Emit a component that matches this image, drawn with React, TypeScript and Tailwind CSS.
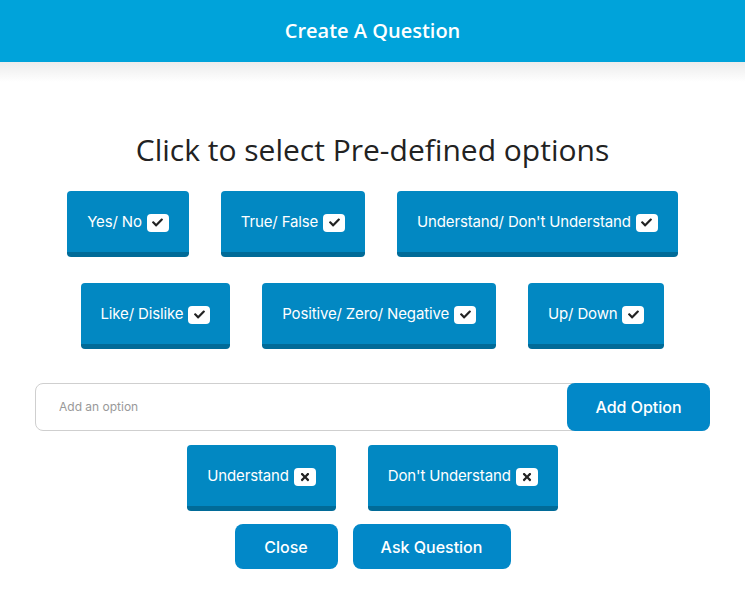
import React from 'react';
import { FaCheck, FaTimes } from 'react-icons/fa';

const presetRows = [
  ['Yes/ No', 'True/ False', "Understand/ Don't Understand"],
  ['Like/ Dislike', 'Positive/ Zero/ Negative', 'Up/ Down'],
];

const OptionButton = ({ label, selected }: { label: string; selected: boolean }) => (
  <button className="h-[66px] px-5 pt-[2px] flex items-center gap-[5px] bg-[#0288c2] border-b-[5px] border-[#016b98] rounded-[4px] text-white text-[15px] tracking-[-0.15px] font-['Inter',sans-serif]">
    <span>{label}</span>
    <span className="w-[22px] h-[18px] rounded-[4px] bg-white flex items-center justify-center text-[#222]">
      {selected ? <FaCheck className="w-[11px] h-[11px]" /> : <FaTimes className="w-[12px] h-[12px]" />}
    </span>
  </button>
);

export default function App() {
  return (
    <div className="w-[745px] h-[603px] bg-white overflow-hidden font-['Inter',sans-serif]">
      {/* Header */}
      <div className="relative h-[62px] bg-[#00a3da] flex items-center justify-center">
        <h1 className="text-white text-[20px] font-semibold font-['Open_Sans',sans-serif]">
          Create A Question
        </h1>
        <div className="absolute left-0 right-0 top-[62px] h-[20px] bg-gradient-to-b from-[#ececec] to-white" />
      </div>

      <div className="flex flex-col items-center pt-[69px]">
        <h2 className="text-[30px] leading-[38px] text-[#222] font-['Open_Sans',sans-serif]">
          Click to select Pre-defined options
        </h2>

        <div className="mt-[22px] flex flex-col items-center gap-[26px]">
          {presetRows.map((row, i) => (
            <div key={i} className="flex gap-8">
              {row.map((label) => (
                <OptionButton key={label} label={label} selected />
              ))}
            </div>
          ))}
        </div>

        {/* Add option */}
        <div className="mt-[34px] w-[675px] h-[48px] flex border border-[#cfcfcf] rounded-[8px]">
          <input
            className="flex-1 pl-[23px] text-[12px] text-[#555] placeholder-[#999] outline-none bg-transparent rounded-l-[8px]"
            placeholder="Add an option"
          />
          <button className="-my-px -mr-px w-[143px] bg-[#0288c8] rounded-[8px] text-white text-[16px] font-medium">
            Add Option
          </button>
        </div>

        <div className="mt-[14px] flex gap-8">
          <OptionButton label="Understand" selected={false} />
          <OptionButton label="Don't Understand" selected={false} />
        </div>

        <div className="mt-[13px] flex gap-[15px]">
          <button className="h-[45px] w-[103px] bg-[#0288c8] rounded-[8px] text-white text-[16px] font-medium">
            Close
          </button>
          <button className="h-[45px] w-[158px] bg-[#0288c8] rounded-[8px] text-white text-[16px] font-medium">
            Ask Question
          </button>
        </div>
      </div>
    </div>
  );
}
